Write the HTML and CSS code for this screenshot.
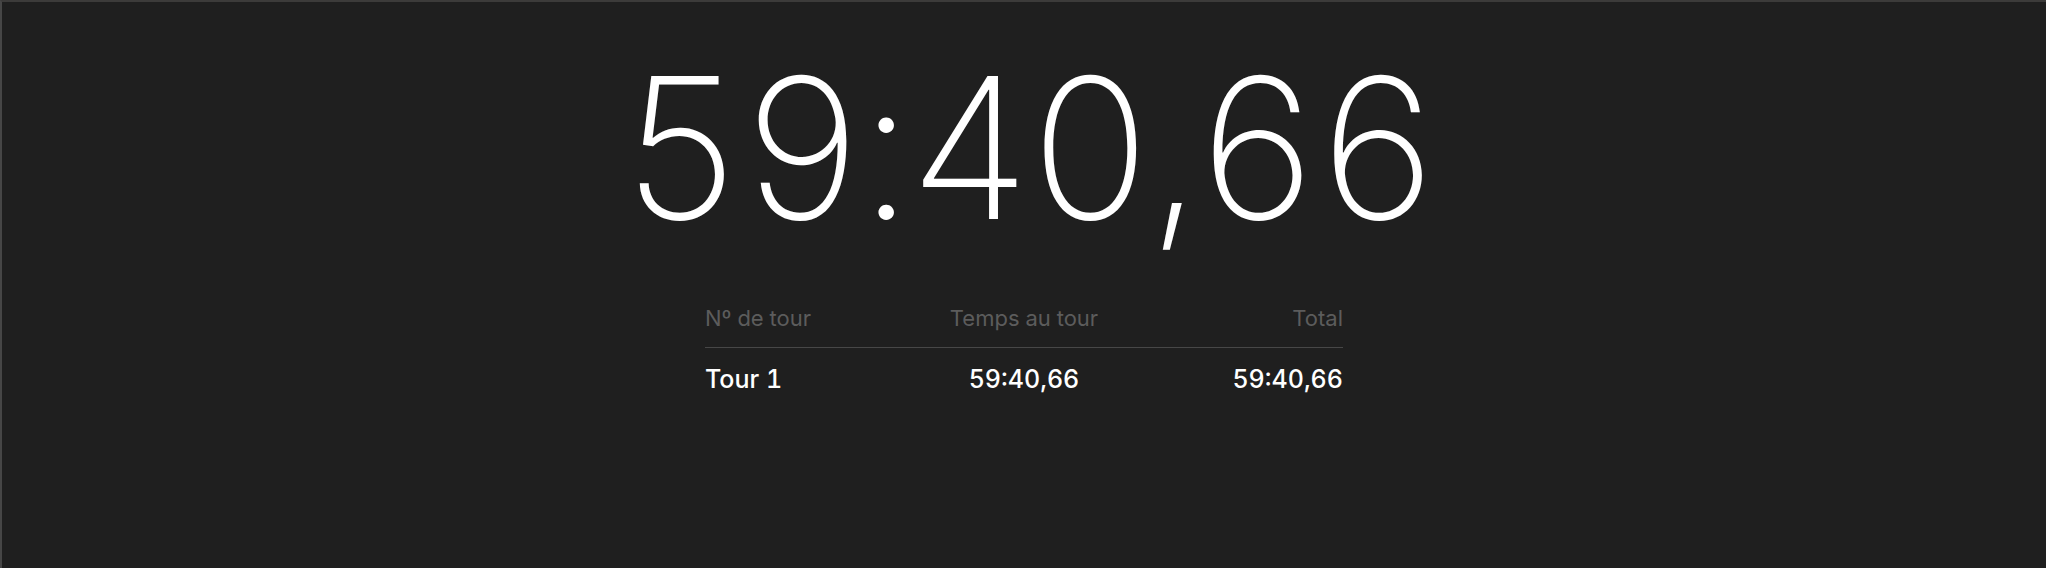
FILE: index.html
```html
<!DOCTYPE html>
<html lang="fr">
<head>
<meta charset="utf-8">
<title>Chronomètre</title>
<link rel="stylesheet" href="styles.css">
</head>
<body>
<div class="window">
  <main class="stopwatch">
    <div class="timer">59:40,66</div>
    <div class="laps">
      <div class="laps-head">
        <span class="col col-num">Nº de tour</span>
        <span class="col col-lap">Temps au tour</span>
        <span class="col col-total">Total</span>
      </div>
      <div class="lap-row">
        <span class="col col-num">Tour 1</span>
        <span class="col col-lap">59:40,66</span>
        <span class="col col-total">59:40,66</span>
      </div>
    </div>
  </main>
</div>
</body>
</html>
```

FILE: styles.css
```css
html, body {
  margin: 0;
  padding: 0;
  height: 100%;
  background: #1f1f1f;
}

.window {
  box-sizing: border-box;
  height: 568px;
  background: #1f1f1f;
  border-top: 2px solid #3c3b3a;
  border-left: 2px solid #464646;
  font-family: Inter, "Noto Sans", "Liberation Sans", sans-serif;
  color: #ffffff;
}

.stopwatch {
  display: flex;
  flex-direction: column;
  align-items: center;
  padding-top: 48px;
}

.timer {
  font-size: 196px;
  line-height: 196px;
  font-weight: 200;
  font-variant-numeric: tabular-nums;
  letter-spacing: -6px;
  margin-right: -6px;
}

.laps {
  width: 638px;
  margin-top: 59px;
  font-variant-numeric: tabular-nums;
}

.laps-head,
.lap-row {
  display: grid;
  grid-template-columns: 1fr 1fr 1fr;
  align-items: baseline;
}

.laps-head {
  font-size: 22px;
  line-height: 26px;
  color: #5c5c5c;
  padding-bottom: 16px;
  border-bottom: 1px solid #474747;
}

.lap-row {
  font-size: 25px;
  line-height: 32px;
  font-weight: 500;
  padding-top: 15px;
}

.col-num { text-align: left; }
.col-lap { text-align: center; }
.col-total { text-align: right; }
```
